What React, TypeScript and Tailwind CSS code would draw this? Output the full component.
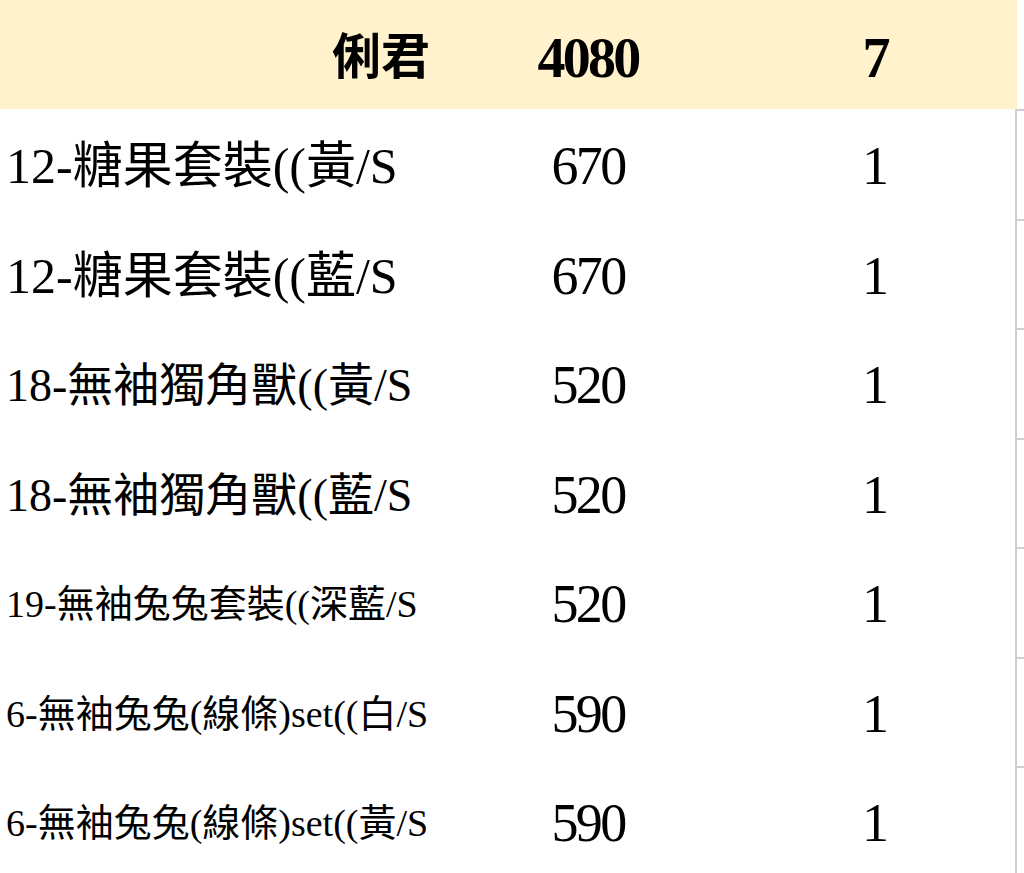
const rows = [
  { name: "12-糖果套裝((黃/S", size: "text-[50px]", price: "670", qty: "1" },
  { name: "12-糖果套裝((藍/S", size: "text-[50px]", price: "670", qty: "1" },
  { name: "18-無袖獨角獸((黃/S", size: "text-[46px]", price: "520", qty: "1" },
  { name: "18-無袖獨角獸((藍/S", size: "text-[46px]", price: "520", qty: "1" },
  { name: "19-無袖兔兔套裝((深藍/S", size: "text-[38px]", price: "520", qty: "1" },
  { name: "6-無袖兔兔(線條)set((白/S", size: "text-[38px]", price: "590", qty: "1" },
  { name: "6-無袖兔兔(線條)set((黃/S", size: "text-[38px]", price: "590", qty: "1" },
];

const App = () => {
  return (
    <div
      className="w-[1024px] h-[873px] overflow-hidden bg-white text-black"
      style={{ fontFamily: '"Liberation Serif", "Noto Sans CJK TC", serif' }}
    >
      {/* summary row */}
      <div className="flex h-[109px]">
        <div className="flex w-[1017px] bg-[#fff2cc] font-bold">
          <div className="w-[440px] flex items-center justify-end pr-[10px] pt-[6px] text-[49px]">俐君</div>
          <div className="w-[296px] flex items-center justify-center pt-[6px] text-[56px] tracking-[-0.05em]">4080</div>
          <div className="w-[281px] flex items-center justify-center pt-[6px] text-[56px]">7</div>
        </div>
        <div className="flex-1" />
      </div>

      {/* item rows */}
      {rows.map((row, i) => (
        <div key={i} className="flex h-[109.5px]">
          <div className={`w-[440px] flex items-center pl-[6px] pt-[6px] whitespace-nowrap ${row.size}`}>
            {row.name}
          </div>
          <div className="w-[296px] flex items-center justify-center pt-[6px] text-[54px] tracking-[-0.05em]">
            {row.price}
          </div>
          <div className="w-[279px] flex items-center justify-center pt-[6px] text-[54px]">{row.qty}</div>
          <div className="flex-1 border-l-2 border-t-2 border-[#cfcfcf]" />
        </div>
      ))}
    </div>
  );
};

export default App;
